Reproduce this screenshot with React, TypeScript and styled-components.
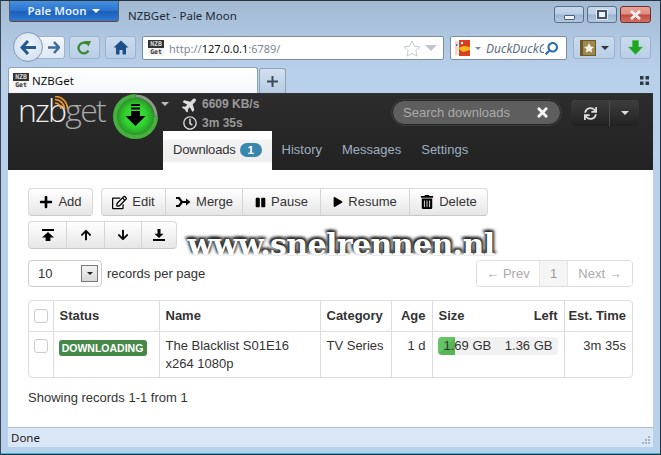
import React from "react";
import styled, { createGlobalStyle } from "styled-components";
import {
  FaPlus,
  FaPause,
  FaPlay,
  FaArrowUp,
  FaArrowDown,
  FaPlane,
  FaRegClock,
  FaSync,
  FaTimes,
  FaTrashAlt,
  FaRegEdit,
  FaSearch,
} from "react-icons/fa";

const GlobalStyle = createGlobalStyle`
  html, body { margin: 0; padding: 0; background: #b8cfe8; }
  * { box-sizing: border-box; }
`;

const ui = `"Noto Sans", "Open Sans", sans-serif`;
const web = `"Liberation Sans", Arial, sans-serif`;

const Frame = styled.div`
  position: relative;
  width: 661px;
  height: 455px;
  display: flex;
  flex-direction: column;
  overflow: hidden;
  border: 1px solid #26323c;
  border-left-color: #3a4754;
  background: linear-gradient(#a3b9d2 0, #b0c8e2 40px, #b8d0ea 70px, #b8d0ea 100%);
  font-family: ${ui};
`;

/* title bar */
const TitleBar = styled.div`
  height: 31px;
  flex: none;
  display: flex;
  align-items: flex-start;
  padding-left: 8px;
`;

const AppButton = styled.div`
  width: 110px;
  height: 22px;
  margin-top: -1px;
  display: flex;
  align-items: center;
  justify-content: center;
  gap: 6px;
  color: #e8f2ff;
  font-size: 11.5px;
  font-weight: 600;
  border: 1px solid #54606c;
  border-bottom-color: #7a3f22;
  border-top: 0;
  border-radius: 0 0 3px 3px;
  background: linear-gradient(#4a94e0 0, #2a74cf 50%, #1b5fb8 55%, #2d7ad6 100%);
`;

const Caret = styled.span<{ $color?: string; $size?: number }>`
  display: inline-block;
  width: 0;
  height: 0;
  border-left: ${(p) => p.$size ?? 4}px solid transparent;
  border-right: ${(p) => p.$size ?? 4}px solid transparent;
  border-top: ${(p) => p.$size ?? 4}px solid ${(p) => p.$color ?? "#fff"};
`;

const WindowTitle = styled.div`
  margin-left: 9px;
  margin-top: 6px;
  font-size: 11.5px;
  line-height: 17px;
  color: #1c2a3a;
`;

const WindowControls = styled.div`
  margin-left: auto;
  margin-right: 9px;
  margin-top: 5px;
  display: flex;
  gap: 3px;
`;

const WindowButton = styled.div<{ $close?: boolean; $w: number }>`
  width: ${(p) => p.$w}px;
  height: 17px;
  display: flex;
  align-items: center;
  justify-content: center;
  border: 1px solid ${(p) => (p.$close ? "#6b2f2c" : "#5a6e86")};
  border-radius: 3px;
  background: ${(p) =>
    p.$close
      ? "linear-gradient(#e8a297 0, #dc8f84 48%, #bf4a3e 52%, #d56f62 100%)"
      : "linear-gradient(#c6d8ec 0, #b9cee6 48%, #9db5d1 52%, #b3c9e2 100%)"};
`;

const MinGlyph = styled.span`
  width: 11px;
  height: 5px;
  margin-top: 5px;
  background: #eef3f8;
  border: 1px solid #4f6074;
  border-radius: 1px;
`;

const MaxGlyph = styled.span`
  width: 10px;
  height: 9px;
  background: #eef3f8;
  border: 2px solid #44546a;
  outline: 1px solid #dfe8f2;
`;

/* nav bar */
const NavBar = styled.div`
  height: 35px;
  flex: none;
  display: flex;
  align-items: flex-start;
  padding-left: 12px;
`;

const BackButton = styled.div`
  position: relative;
  z-index: 1;
  width: 30px;
  height: 30px;
  display: flex;
  align-items: center;
  justify-content: center;
  border-radius: 50%;
  border: 1px solid #8499b3;
  background: radial-gradient(circle at 50% 40%, #eef4fb 0, #d6e3f2 70%, #c2d4e8 100%);
`;

const ToolButton = styled.div<{ $w: number; $ml: number; $flatLeft?: boolean; $white?: boolean }>`
  width: ${(p) => p.$w}px;
  height: 23px;
  margin-top: 4px;
  margin-left: ${(p) => p.$ml}px;
  display: flex;
  align-items: center;
  justify-content: center;
  gap: 5px;
  border: 1px solid #9db2cb;
  border-radius: ${(p) => (p.$flatLeft ? "0 3px 3px 0" : "3px")};
  background: ${(p) =>
    p.$white
      ? "linear-gradient(#f3f7fc, #dde8f5)"
      : "linear-gradient(#cadbee, #b9cfe8)"};
`;

const UrlBar = styled.div`
  width: 302px;
  height: 24px;
  margin-top: 4px;
  margin-left: 6px;
  padding: 0 6px 0 5px;
  display: flex;
  align-items: center;
  background: #fff;
  border: 1px solid #7d8ea4;
  border-radius: 2px;
`;

const UrlText = styled.div`
  margin-left: 5px;
  font-size: 11px;
  color: #7b8794;
  b {
    font-weight: 400;
    color: #111;
  }
`;

const UrlEnd = styled.div`
  margin-left: auto;
  display: flex;
  align-items: center;
  gap: 4px;
`;

const SearchBar = styled.div`
  width: 117px;
  height: 24px;
  margin-top: 4px;
  margin-left: 6px;
  padding: 0 1px 0 4px;
  display: flex;
  align-items: center;
  background: #fff;
  border: 1px solid #7d8ea4;
  border-radius: 2px;
`;

const SearchHint = styled.div`
  width: 58px;
  margin-left: 5px;
  overflow: hidden;
  white-space: nowrap;
  font-size: 12px;
  font-style: italic;
  color: #5b6c85;
`;

/* favicon */
const FavBox = styled.span`
  flex: none;
  width: 16px;
  height: 16px;
  display: flex;
  flex-direction: column;
  font-family: "DejaVu Sans Mono", monospace;
  font-size: 6.5px;
  font-weight: 700;
  line-height: 8px;
  text-align: center;
  overflow: hidden;
`;

const FavTop = styled.span`
  height: 8px;
  background: #333;
  color: #ddd;
`;

const FavBottom = styled.span`
  height: 8px;
  background: #f2f2f2;
  color: #333;
`;

const Favicon = () => (
  <FavBox>
    <FavTop>NZB</FavTop>
    <FavBottom>Get</FavBottom>
  </FavBox>
);

/* tab strip */
const TabStrip = styled.div`
  height: 26px;
  flex: none;
  display: flex;
  align-items: flex-end;
  padding-left: 7px;
`;

const BrowserTab = styled.div`
  width: 250px;
  height: 26px;
  padding-left: 4px;
  display: flex;
  align-items: center;
  gap: 3px;
  font-size: 11.5px;
  color: #111;
  background: linear-gradient(#fff, #f4f7fb);
  border: 1px solid #8ea2ba;
  border-bottom: 0;
  border-radius: 3px 3px 0 0;
`;

const NewTab = styled.div`
  width: 27px;
  height: 25px;
  margin-left: 1px;
  display: flex;
  align-items: center;
  justify-content: center;
  border: 1px solid #8ea2ba;
  border-bottom: 0;
  border-radius: 3px 3px 0 0;
  background: linear-gradient(#d3e1f0, #b6cbe3);
`;

const StripEnd = styled.div`
  margin-left: auto;
  margin-right: 11px;
  margin-bottom: 8px;
  display: flex;
`;

/* page */
const Page = styled.div`
  flex: 1;
  margin: 0 7px;
  display: flex;
  flex-direction: column;
  background: #fff;
  font-family: ${web};
  font-size: 13px;
  color: #333;
`;

const Header = styled.div`
  height: 77px;
  flex: none;
  display: flex;
  flex-direction: column;
  border-top: 1px solid #333;
  background: linear-gradient(#2c2c2c, #222);
`;

const HeaderTop = styled.div`
  height: 37px;
  flex: none;
  display: flex;
  align-items: flex-start;
  padding: 0 14px 0 10px;
`;

const Logo = styled.div`
  position: relative;
  width: 88px;
  margin-top: -3px;
  font-family: "Open Sans", sans-serif;
  font-weight: 300;
  font-size: 32px;
  line-height: 38px;
  letter-spacing: -1.8px;
  color: #eee;
  white-space: nowrap;
  span {
    color: #aaa;
  }
`;

const LogoWaves = styled.svg`
  position: absolute;
  left: 36px;
  top: 5px;
`;

const StatusDisc = styled.svg`
  flex: none;
  margin-left: 7px;
  margin-top: 0;
`;

const DiscCaret = styled.div`
  margin-left: 3px;
  margin-top: 8px;
  display: flex;
`;

const Stats = styled.div`
  margin-left: 13px;
  margin-top: 1px;
  display: flex;
  flex-direction: column;
  gap: 1px;
`;

const StatRow = styled.div`
  display: flex;
  align-items: center;
  gap: 4px;
  height: 18px;
  font-size: 12px;
  font-weight: 700;
  color: #999;
  svg {
    width: 16px;
    color: #ddd;
  }
`;

const SearchBox = styled.div`
  width: 169px;
  height: 25px;
  margin-left: auto;
  margin-top: 6px;
  padding: 0 10px;
  display: flex;
  align-items: center;
  justify-content: space-between;
  border-radius: 13px;
  border: 1px solid #262626;
  box-shadow: 0 0 0 1px #3a3a3a;
  background: #5e5e5e;
  color: #aaa;
  font-size: 13px;
`;

const DarkGroup = styled.div`
  margin-left: 10px;
  margin-top: 6px;
  display: flex;
  height: 26px;
  border-radius: 4px;
  overflow: hidden;
  background: linear-gradient(#3d3d3d, #222);
`;

const DarkButton = styled.div<{ $w: number }>`
  width: ${(p) => p.$w}px;
  display: flex;
  align-items: center;
  justify-content: center;
  & + & {
    border-left: 1px solid #4a4a4a;
  }
`;

const HeaderNav = styled.div`
  flex: 1;
  display: flex;
  align-items: stretch;
  padding-left: 155px;
`;

const NavItem = styled.div<{ $active?: boolean }>`
  display: flex;
  align-items: center;
  gap: 4px;
  padding: 0 10px 2px;
  letter-spacing: ${(p) => (p.$active ? "-0.2px" : "0")};
  color: ${(p) => (p.$active ? "#333" : "#9db0c0")};
  background: ${(p) =>
    p.$active
      ? "linear-gradient(#fff 0, #fff 8px, #f3f3f3 9px, #eee 30px, #fff 32px)"
      : "transparent"};
`;

const Badge = styled.span`
  width: 22px;
  height: 14px;
  border-radius: 8px;
  background: #3a87ad;
  color: #fff;
  font-size: 11.5px;
  font-weight: 700;
  line-height: 14px;
  text-align: center;
`;

const Content = styled.div`
  padding: 18px 20px 0;
  display: flex;
  flex-direction: column;
`;

const Toolbar = styled.div<{ $mt?: number }>`
  display: flex;
  gap: 8px;
  margin-top: ${(p) => p.$mt ?? 0}px;
`;

const BtnGroup = styled.div`
  display: flex;
  height: 28px;
  border: 1px solid #d9d9d9;
  border-bottom-color: #c8c8c8;
  border-radius: 4px;
  overflow: hidden;
  background: linear-gradient(#fff, #e6e6e6);
`;

const Btn = styled.div<{ $w: number }>`
  width: ${(p) => p.$w}px;
  display: flex;
  align-items: center;
  justify-content: center;
  gap: 5px;
  color: #333;
  line-height: 20px;
  & + & {
    border-left: 1px solid #d5d5d5;
  }
  svg {
    color: #000;
    flex: none;
  }
`;

const PagerRow = styled.div`
  margin-top: 11px;
  height: 27px;
  display: flex;
  align-items: center;
  justify-content: space-between;
`;

const PageSize = styled.div`
  display: flex;
  align-items: center;
  gap: 5px;
  color: #333;
`;

const SelectBox = styled.div`
  width: 74px;
  height: 27px;
  padding: 0 3px 0 9px;
  display: flex;
  align-items: center;
  justify-content: space-between;
  border: 1px solid #ccc;
  border-radius: 4px;
`;

const SelectArrow = styled.span`
  width: 17px;
  height: 17px;
  display: flex;
  align-items: center;
  justify-content: center;
  border: 1px solid #777;
  background: linear-gradient(#f4f4f4, #d8d8d8);
`;

const Pager = styled.div`
  height: 27px;
  display: flex;
  border: 1px solid #ddd;
  border-radius: 4px;
  overflow: hidden;
  color: #999;
`;

const PagerCell = styled.div<{ $w: number; $current?: boolean }>`
  width: ${(p) => p.$w}px;
  display: flex;
  align-items: center;
  justify-content: center;
  color: ${(p) => (p.$current ? "#999" : "#aaa")};
  background: ${(p) => (p.$current ? "#f5f5f5" : "#fff")};
  & + & {
    border-left: 1px solid #e6e6e6;
  }
`;

const TableWrap = styled.div`
  margin-top: 13px;
  width: 605px;
  border: 1px solid #ddd;
  border-radius: 4px;
  overflow: hidden;
`;

const Grid = styled.table`
  width: 603px;
  table-layout: fixed;
  border-collapse: collapse;
  line-height: 18px;
`;

const Th = styled.th<{ $right?: boolean }>`
  height: 30px;
  padding: 0 6px;
  font-weight: 700;
  color: #333;
  white-space: nowrap;
  text-align: ${(p) => (p.$right ? "right" : "left")};
  border-bottom: 1px solid #ddd;
  border-left: 1px solid #ddd;
  &:first-child {
    border-left: 0;
  }
  &:last-child {
    padding-left: 0;
  }
`;

const Td = styled.td<{ $right?: boolean }>`
  height: 46px;
  padding: 5px 6px 4px;
  vertical-align: top;
  color: #333;
  text-align: ${(p) => (p.$right ? "right" : "left")};
  border-left: 1px solid #ddd;
  &:first-child {
    border-left: 0;
  }
`;

const Check = styled.span`
  display: block;
  width: 14px;
  height: 14px;
  margin-left: -1px;
  border: 1px solid #ccc;
  border-radius: 3px;
  background: #fff;
`;

const RowCheck = styled(Check)`
  margin-top: 2px;
`;

const SizeHead = styled.div`
  display: flex;
  justify-content: space-between;
`;

const StatusLabel = styled.span`
  display: block;
  width: 88px;
  height: 16px;
  margin: 3px 0 0 -1px;
  border-radius: 3px;
  background: #468847;
  color: #fff;
  font-size: 10.5px;
  font-weight: 700;
  line-height: 16px;
  text-align: center;
`;

const Progress = styled.div`
  position: relative;
  height: 18px;
  margin: 0 0 0 -1px;
  width: 120px;
  display: flex;
  justify-content: space-between;
  padding: 0 5px 0 6px;
  border-radius: 4px;
  overflow: hidden;
  background: #f1f1f1;
  color: #333;
  span {
    position: relative;
  }
`;

const ProgressFill = styled.div<{ $w: number }>`
  position: absolute;
  left: 0;
  top: 0;
  bottom: 0;
  width: ${(p) => p.$w}px;
  background: linear-gradient(135deg, #62c462 0, #62c462 50%, #57b757 50%, #57b757 100%);
`;

const Showing = styled.div`
  margin-top: 12px;
  color: #333;
`;

/* status bar */
const StatusBar = styled.div`
  height: 20px;
  flex: none;
  margin: 0 7px;
  padding: 0 3px 0 3px;
  display: flex;
  align-items: center;
  justify-content: space-between;
  font-size: 11.5px;
  color: #1a1a1a;
  border-top: 1px solid #a9bdd6;
  background: #d9e7f6;
`;

const BottomEdge = styled.div`
  height: 7px;
  flex: none;
  border-bottom: 1px solid #38b4cf;
`;

const Watermark = styled.div`
  position: absolute;
  left: 183px;
  top: 226px;
  width: 314px;
  text-align: center;
  white-space: nowrap;
  font-family: "DejaVu Serif", serif;
  font-weight: 700;
  font-size: 30px;
  line-height: 36px;
  letter-spacing: -0.6px;
  color: #fff;
  text-shadow: -2px -2px 3px #222, 2px -2px 3px #333, 0 -1px 2px #555;
`;

const TopArrow = () => (
  <svg width="14" height="14" viewBox="0 0 14 14">
    <path d="M1 1h12v2H1zM7 4l6 5.5h-3.6V13H4.6V9.5H1z" fill="#000" />
  </svg>
);

const BottomArrow = () => (
  <svg width="14" height="14" viewBox="0 0 14 14">
    <path d="M1 11h12v2H1zM7 10L2.5 5.8h3V1h3v4.8h3z" fill="#000" />
  </svg>
);

const MergeIcon = () => (
  <svg width="16" height="14" viewBox="0 0 16 14">
    <path d="M1 3h3l3 4-3 4H1M7 7h6" fill="none" stroke="#000" strokeWidth="2.2" />
    <path d="M11 3.5L15.5 7 11 10.5z" fill="#000" />
  </svg>
);

const App: React.FC = () => {
  return (
    <>
      <GlobalStyle />
      <Frame>
        <TitleBar>
          <AppButton>
            Pale Moon <Caret />
          </AppButton>
          <WindowTitle>NZBGet - Pale Moon</WindowTitle>
          <WindowControls>
            <WindowButton $w={30}>
              <MinGlyph />
            </WindowButton>
            <WindowButton $w={30}>
              <MaxGlyph />
            </WindowButton>
            <WindowButton $w={31} $close>
              <svg width="13" height="10" viewBox="0 0 13 10">
                <path d="M2 1l9 8M11 1L2 9" stroke="#fff" strokeWidth="2.6" />
                <path d="M2 1l9 8M11 1L2 9" stroke="#7a4a44" strokeWidth="0.5" opacity="0.4" />
              </svg>
            </WindowButton>
          </WindowControls>
        </TitleBar>

        <NavBar>
          <BackButton>
            <svg width="17" height="15" viewBox="0 0 17 15">
              <path d="M8 1L2 7.5 8 14M2.5 7.5H16" fill="none" stroke="#23598f" strokeWidth="3" />
            </svg>
          </BackButton>
          <ToolButton $w={29} $ml={-7} $flatLeft $white>
            <svg style={{ marginLeft: 6 }} width="12" height="13" viewBox="0 0 12 13">
              <path d="M6 1l5 5.5L6 12M10.5 6.5H0" fill="none" stroke="#3a6c9e" strokeWidth="2.6" />
            </svg>
          </ToolButton>
          <ToolButton $w={31} $ml={4}>
            <svg width="15" height="15" viewBox="0 0 17 16">
              <path d="M13 11.5A6 6 0 1 1 11 3.5" fill="none" stroke="#3f8a2e" strokeWidth="2.6" />
              <path d="M8 0.5L16 0.5 13 7z" fill="#3f8a2e" />
            </svg>
          </ToolButton>
          <ToolButton $w={31} $ml={5}>
            <svg width="16" height="15" viewBox="0 0 16 15">
              <path d="M8 0.5L0.5 7.5H3V14.5H6.5V10h3v4.5H13V7.5h2.5z" fill="#1f4f8a" />
            </svg>
          </ToolButton>
          <UrlBar>
            <Favicon />
            <UrlText>
              http://<b>127.0.0.1</b>:6789/
            </UrlText>
            <UrlEnd>
              <svg width="18" height="17" viewBox="0 0 18 17">
                <path
                  d="M9 1l2.4 5.2 5.6.6-4.2 3.8 1.2 5.5L9 13.3 4 16.1l1.2-5.5L1 6.8l5.6-.6z"
                  fill="#fff"
                  stroke="#c4c8cc"
                />
              </svg>
              <Caret $color="#c0c6cc" $size={6} />
            </UrlEnd>
          </UrlBar>
          <SearchBar>
            <svg width="16" height="18" viewBox="0 0 16 18">
              <path d="M0 2h3v14H0z" fill="#f6d5c8" />
              <path d="M4 1h11v16H4z" fill="#d9401f" />
              <path d="M3 9l6-2 6 1v3l-7 2z" fill="#f4b81c" />
              <circle cx="7" cy="4" r="1.2" fill="#fff" />
              <path d="M1 5h1.4v2H1z" fill="#3b79c4" />
            </svg>
            <Caret style={{ marginLeft: 4 }} $color="#7e8894" $size={3} />
            <SearchHint>DuckDuckGo</SearchHint>
            <FaSearch size={13} color="#2a6cb0" style={{ transform: "scaleX(-1)", marginLeft: 1 }} />
          </SearchBar>
          <ToolButton $w={42} $ml={6}>
            <svg width="16" height="16" viewBox="0 0 16 16">
              <path d="M0 0h16v16H0z" fill="#6f5a25" />
              <path d="M3 1h12v14H3z" fill="#9a8a4e" />
              <path d="M9 3l1.7 3.4 3.3.5-2.5 2.3.6 3.4L9 11l-3.1 1.6.6-3.4L4 6.9l3.3-.5z" fill="#f1f0ea" />
            </svg>
            <Caret $color="#2c3540" />
          </ToolButton>
          <ToolButton $w={31} $ml={5}>
            <svg width="15" height="15" viewBox="0 0 15 15">
              <path d="M4.5 0.5h6v6.5H14.500L7.500 14.500 0.500 7h4z" fill="#1fa51f" stroke="#2fc42f" strokeWidth="0.5" />
            </svg>
          </ToolButton>
        </NavBar>

        <TabStrip>
          <BrowserTab>
            <Favicon />
            NZBGet
          </BrowserTab>
          <NewTab>
            <svg width="11" height="11" viewBox="0 0 11 11">
              <path d="M4.500 0h2v4.500H11v2H6.500V11h-2V6.500H0v-2h4.500z" fill="#3d4a58" />
            </svg>
          </NewTab>
          <StripEnd>
            <svg width="9" height="9" viewBox="0 0 9 9">
              <path d="M0 0h3.500v3.500H0zM5.500 0H9v3.500H5.500zM0 5.500h3.500V9H0zM5.500 5.500H9V9H5.500z" fill="#2d3a48" />
            </svg>
          </StripEnd>
        </TabStrip>

        <Page>
          <Header>
            <HeaderTop>
              <Logo>
                nzb<span>get</span>
                <LogoWaves width="14" height="14" viewBox="0 0 14 14">
                  <path
                    d="M1 7a6 6 0 0 1 6 6M1 3.500a9.500 9.500 0 0 1 9.500 9.500M1 0.500A12.500 12.500 0 0 1 13.500 13"
                    fill="none"
                    stroke="#f09a2c"
                    strokeWidth="1.700"
                  />
                </LogoWaves>
              </Logo>
              <StatusDisc width="45" height="45" viewBox="0 0 45 45">
                <defs>
                  <radialGradient id="disc">
                    <stop offset="0" stopColor="#3fe83a" />
                    <stop offset="0.6" stopColor="#2fd02c" />
                    <stop offset="1" stopColor="#2b8f28" />
                  </radialGradient>
                </defs>
                <circle cx="22.500" cy="22.500" r="19" fill="url(#disc)" />
                <path
                  d="M22.500 2A20.500 20.500 0 1 0 43 22.500"
                  fill="none"
                  stroke="#45b03e"
                  strokeWidth="4"
                />
                <path d="M22.500 2A20.500 20.500 0 0 1 43 22.500" fill="none" stroke="#8d9a8b" strokeWidth="3" />
                <path
                  d="M18 10h9v2h-9zM18 13.500h9v2h-9zM18 17h9v5h5.500l-10 10-10-10H18z"
                  fill="#000"
                />
              </StatusDisc>
              <DiscCaret>
                <Caret $color="#bbb" />
              </DiscCaret>
              <Stats>
                <StatRow>
                  <FaPlane size={15} style={{ transform: "rotate(-45deg)" }} />
                  6609 KB/s
                </StatRow>
                <StatRow>
                  <FaRegClock size={14} />
                  3m 35s
                </StatRow>
              </Stats>
              <SearchBox>
                Search downloads
                <FaTimes size={15} color="#fff" />
              </SearchBox>
              <DarkGroup>
                <DarkButton $w={38}>
                  <FaSync size={13} color="#ddd" />
                </DarkButton>
                <DarkButton $w={30}>
                  <Caret $color="#ddd" />
                </DarkButton>
              </DarkGroup>
            </HeaderTop>
            <HeaderNav>
              <NavItem $active>
                Downloads <Badge>1</Badge>
              </NavItem>
              <NavItem>History</NavItem>
              <NavItem>Messages</NavItem>
              <NavItem>Settings</NavItem>
            </HeaderNav>
          </Header>

          <Content>
            <Toolbar>
              <BtnGroup>
                <Btn $w={63}>
                  <FaPlus size={14} /> Add
                </Btn>
              </BtnGroup>
              <BtnGroup>
                <Btn $w={63}>
                  <FaRegEdit size={15} /> Edit
                </Btn>
                <Btn $w={77}>
                  <MergeIcon /> Merge
                </Btn>
                <Btn $w={78}>
                  <FaPause size={11} /> Pause
                </Btn>
                <Btn $w={89}>
                  <FaPlay size={10} /> Resume
                </Btn>
                <Btn $w={78}>
                  <FaTrashAlt size={14} /> Delete
                </Btn>
              </BtnGroup>
            </Toolbar>
            <Toolbar $mt={5}>
              <BtnGroup>
                <Btn $w={37}>
                  <TopArrow />
                </Btn>
                <Btn $w={38}>
                  <FaArrowUp size={12} />
                </Btn>
                <Btn $w={37}>
                  <FaArrowDown size={12} />
                </Btn>
                <Btn $w={35}>
                  <BottomArrow />
                </Btn>
              </BtnGroup>
            </Toolbar>
            <PagerRow>
              <PageSize>
                <SelectBox>
                  10
                  <SelectArrow>
                    <Caret $color="#222" $size={3} />
                  </SelectArrow>
                </SelectBox>
                records per page
              </PageSize>
              <Pager>
                <PagerCell $w={62}>← Prev</PagerCell>
                <PagerCell $w={28} $current>
                  1
                </PagerCell>
                <PagerCell $w={65}>Next →</PagerCell>
              </Pager>
            </PagerRow>
            <TableWrap>
              <Grid>
                <colgroup>
                  <col width={24} />
                  <col width={106} />
                  <col width={161} />
                  <col width={71} />
                  <col width={41} />
                  <col width={132} />
                  <col width={68} />
                </colgroup>
                <thead>
                  <tr>
                    <Th>
                      <Check />
                    </Th>
                    <Th>Status</Th>
                    <Th>Name</Th>
                    <Th>Category</Th>
                    <Th $right>Age</Th>
                    <Th>
                      <SizeHead>
                        <span>Size</span>
                        <span>Left</span>
                      </SizeHead>
                    </Th>
                    <Th $right>Est. Time</Th>
                  </tr>
                </thead>
                <tbody>
                  <tr>
                    <Td>
                      <RowCheck />
                    </Td>
                    <Td>
                      <StatusLabel>DOWNLOADING</StatusLabel>
                    </Td>
                    <Td>The Blacklist S01E16 x264 1080p</Td>
                    <Td>TV Series</Td>
                    <Td $right>1 d</Td>
                    <Td>
                      <Progress>
                        <ProgressFill $w={17} />
                        <span>1.69 GB</span>
                        <span>1.36 GB</span>
                      </Progress>
                    </Td>
                    <Td $right>3m 35s</Td>
                  </tr>
                </tbody>
              </Grid>
            </TableWrap>
            <Showing>Showing records 1-1 from 1</Showing>
          </Content>
        </Page>

        <StatusBar>
          Done
          <svg width="10" height="10" viewBox="0 0 10 10" style={{ marginTop: 6 }}>
            <path d="M8 0h2v2H8zM5 3h2v2H5zM8 3h2v2H8zM2 6h2v2H2zM5 6h2v2H5zM8 6h2v2H8z" fill="#a4b4c6" />
          </svg>
        </StatusBar>
        <BottomEdge />
        <Watermark>www.snelrennen.nl</Watermark>
      </Frame>
    </>
  );
};

export default App;
